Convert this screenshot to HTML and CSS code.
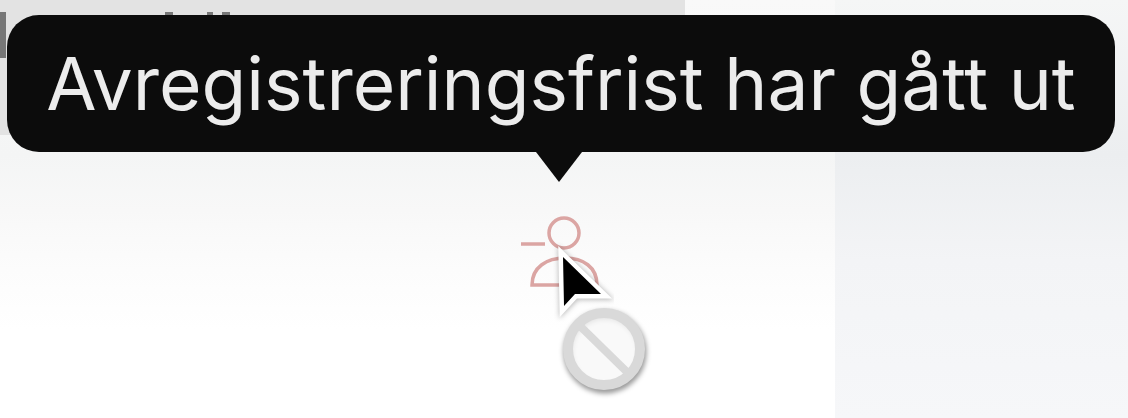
FILE: index.html
```html
<!DOCTYPE html>
<html lang="en">
<head>
    <meta charset="UTF-8">
    <title>Avregistrering</title>
    <link rel="stylesheet" href="styles.css">
</head>
<body>
    <div class="page">
        <main class="main">
            <div class="row-header">
                <span class="mark mark-stem"></span>
                <span class="mark mark-a"></span>
                <span class="mark mark-b"></span>
                <span class="mark mark-c"></span>
            </div>
            <div class="action">
                <svg class="unregister-icon" width="80" height="80" viewBox="0 0 80 80" fill="none">
                    <circle cx="43" cy="18" r="15" />
                    <path d="M0 29H24" />
                    <path d="M11 70C11 52 26 43 44 43C62 43 76 52 76 70Z" />
                </svg>
            </div>
        </main>
        <aside class="side"></aside>
    </div>

    <div class="tooltip">
        <span class="tooltip-text">Avregistreringsfrist har gått ut</span>
        <span class="tooltip-arrow"></span>
    </div>

    <svg class="cursor" width="100" height="150" viewBox="0 0 100 150">
        <defs>
            <filter id="soft" x="-30%" y="-30%" width="160%" height="160%">
                <feGaussianBlur stdDeviation="2.5" />
            </filter>
        </defs>
        <circle class="no-shadow" cx="47" cy="98" r="37" filter="url(#soft)" />
        <circle class="no-ring" cx="46" cy="95" r="36" />
        <path class="no-bar" d="M23 73L69 118" />
        <path class="pointer-shadow" d="M5 3L6 53L18 41H44Z" filter="url(#soft)" />
        <path class="pointer" d="M5 3L6 52L17 40H43Z" />
    </svg>
</body>
</html>
```

FILE: styles.css
```css
html, body {
    margin: 0;
    padding: 0;
    height: 100%;
    overflow: hidden;
    background: #fff;
    font-family: Inter, "Liberation Sans", sans-serif;
}
.page {
    display: flex;
    height: 418px;
}
.main {
    width: 835px;
    background: linear-gradient(#f9f9f9 0, #f4f5f5 155px, #f8f8f8 210px, #fcfcfc 270px, #fff 330px);
}
.side {
    flex: 1;
    background: linear-gradient(#f5f6f6 0, #eceef0 155px, #f3f4f6 260px, #f6f7f9 100%);
}
.row-header {
    display: flex;
    align-items: flex-start;
    width: 685px;
    height: 123px;
    padding-top: 12px;
    background: #e3e3e3;
}
.mark {
    display: block;
    height: 4px;
    background: #777;
    filter: blur(0.5px);
}
.mark-stem {
    width: 6px;
    height: 46px;
}
.mark-a {
    width: 8px;
    margin-left: 159px;
}
.mark-b {
    width: 6px;
    margin-left: 34px;
}
.mark-c {
    width: 8px;
    margin-left: 9px;
}
.action {
    padding: 80px 0 0 521px;
}
.unregister-icon {
    display: block;
    filter: blur(0.6px);
}
.unregister-icon circle, .unregister-icon path {
    stroke: #dba5a3;
    stroke-width: 3.5;
}
.tooltip {
    position: absolute;
    left: 7px;
    top: 15px;
    width: 1108px;
    height: 137px;
    border-radius: 32px;
    background: #0c0c0c;
    color: #ececec;
    font-size: 73px;
    line-height: 137px;
    text-align: center;
    white-space: nowrap;
}
.tooltip-text {
    display: block;
    filter: blur(0.6px);
}
.tooltip-arrow {
    position: absolute;
    left: 529px;
    top: 137px;
    width: 0;
    height: 0;
    border-left: 23px solid transparent;
    border-right: 23px solid transparent;
    border-top: 30px solid #0c0c0c;
}
.cursor {
    position: absolute;
    left: 558px;
    top: 254px;
    overflow: visible;
}
.no-shadow {
    fill: none;
    stroke: rgba(0, 0, 0, 0.4);
    stroke-width: 9;
}
.no-ring {
    fill: #f8f8f8;
    fill-opacity: 0.8;
    stroke: #d9d9d9;
    stroke-width: 10;
}
.no-bar {
    stroke: #d9d9d9;
    stroke-width: 8;
}
.pointer-shadow {
    fill: none;
    stroke: rgba(0, 0, 0, 0.25);
    stroke-width: 10;
}
.pointer {
    fill: #000;
    stroke: #fff;
    stroke-width: 9;
    stroke-linejoin: miter;
    paint-order: stroke;
}
```
